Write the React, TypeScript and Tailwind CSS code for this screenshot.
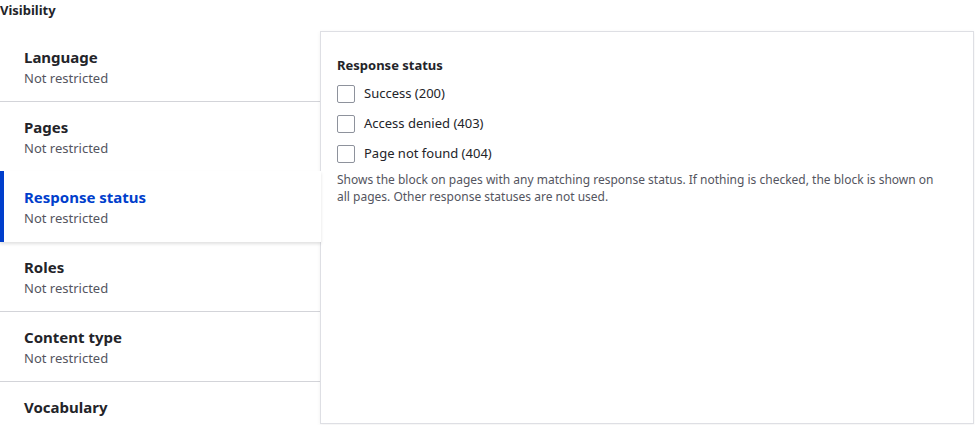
import React, { useState } from "react";

type Tab = {
  id: string;
  title: string;
  summary?: string;
};

const tabs: Tab[] = [
  { id: "language", title: "Language", summary: "Not restricted" },
  { id: "pages", title: "Pages", summary: "Not restricted" },
  { id: "response", title: "Response status", summary: "Not restricted" },
  { id: "roles", title: "Roles", summary: "Not restricted" },
  { id: "type", title: "Content type", summary: "Not restricted" },
  { id: "vocab", title: "Vocabulary" },
];

const statuses = [
  { code: 200, label: "Success (200)" },
  { code: 403, label: "Access denied (403)" },
  { code: 404, label: "Page not found (404)" },
];

export default function App() {
  const [active, setActive] = useState("response");
  const [checked, setChecked] = useState<number[]>([]);

  function toggle(code: number) {
    setChecked((prev) =>
      prev.includes(code) ? prev.filter((c) => c !== code) : [...prev, code]
    );
  }

  return (
    <div className="w-[975px] h-[425px] overflow-hidden bg-white text-[#232429] font-['Noto_Sans',sans-serif]">
      <div className="h-[32px] pt-[1px] text-[13px] leading-[18px] font-bold">Visibility</div>
      <div className="flex h-[393px]">
        <ul className="w-[320px] shrink-0">
          {tabs.map((t) => {
            const isActive = t.id === active;
            return (
              <li
                key={t.id}
                onClick={() => setActive(t.id)}
                className={
                  isActive
                    ? "relative z-10 mr-[-1px] h-[71px] mt-[-1px] bg-white border-l-4 border-[#003ecc] pl-5 pt-[15px] shadow-[0_2px_3px_rgba(0,0,0,0.12)] cursor-pointer"
                    : "h-[70px] border-b border-[#d3d4d9] pl-6 pt-[14px] cursor-pointer"
                }
              >
                <div
                  className={
                    "text-[15px] leading-[22px] font-bold " +
                    (isActive ? "text-[#003ecc]" : "text-[#232429]")
                  }
                >
                  {t.title}
                </div>
                {t.summary && (
                  <div className="text-[13px] leading-[21px] text-[#545560]">{t.summary}</div>
                )}
              </li>
            );
          })}
        </ul>
        <div className="flex-1 mr-[1px] mt-[-1px] h-[393px] border border-[#dedfe4] shadow-[0_1px_4px_rgba(0,0,0,0.06)] px-4 pt-[25px]">
          <div className="text-[13px] leading-[16px] font-bold mb-[12px]">Response status</div>
          <div className="flex flex-col gap-[13px]">
            {statuses.map((s) => (
              <label key={s.code} className="flex items-center gap-[9px] h-[17px] text-[13px] cursor-pointer">
                <span
                  onClick={() => toggle(s.code)}
                  className={
                    "w-[18px] h-[18px] rounded-[2px] border " +
                    (checked.includes(s.code) ? "bg-[#003ecc] border-[#003ecc]" : "border-[#8e929c] bg-white")
                  }
                />
                <span>{s.label}</span>
              </label>
            ))}
          </div>
          <p className="mt-[9px] text-[12px] leading-[17px] text-[#545560] pr-2">
            Shows the block on pages with any matching response status. If nothing is checked, the block is shown on all pages. Other response statuses are not used.
          </p>
        </div>
      </div>
    </div>
  );
}
